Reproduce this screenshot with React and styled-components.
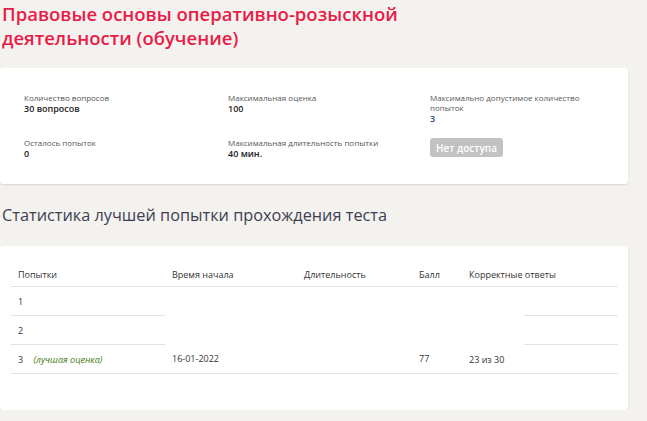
import React from 'react';
import styled, { createGlobalStyle } from 'styled-components';

const GlobalStyle = createGlobalStyle`
  html, body {
    margin: 0;
    padding: 0;
    background: #f3f2ef;
  }
  body {
    font-family: "Open Sans", "Noto Sans", sans-serif;
    color: #333;
  }
`

const Page = styled.div`
  width: 628px;
  padding-top: 2px;
`

const Title = styled.h1`
  margin: 0 0 18px 2px;
  font-size: 18.5px;
  line-height: 24px;
  font-weight: 600;
  color: #e81c48;
`

const Card = styled.div`
  background: #fff;
  border-radius: 3px;
  box-shadow: 0 1px 2px rgba(0, 0, 0, 0.12);
  padding: ${props => props.padding};
`

const InfoGrid = styled.div`
  display: grid;
  grid-template-columns: 204px 202px 1fr;
  row-gap: 13px;
  align-items: start;
`

const Info = styled.div`
  display: flex;
  flex-direction: column;
  max-width: 175px;
`

const Label = styled.span`
  font-size: 8px;
  line-height: 10px;
  color: #555;
`

const Value = styled.span`
  font-size: 9px;
  line-height: 12px;
  font-weight: 600;
  color: ${props => props.accent ? '#2a4a7a' : '#222'};
`

const Button = styled.button`
  align-self: start;
  width: 73px;
  height: 19px;
  padding: 0;
  border: none;
  border-radius: 3px;
  background: #c2c2c2;
  color: #fff;
  font-family: "Open Sans", sans-serif;
  font-size: 10px;
  font-weight: 600;
`

const Heading = styled.h2`
  margin: 20px 0 19px 2px;
  font-size: 16.3px;
  line-height: 23px;
  font-weight: 400;
  color: #3e3e50;
`

const Table = styled.table`
  width: 100%;
  border-collapse: collapse;
  table-layout: fixed;
  font-size: 9px;
`

const Th = styled.th`
  height: 24px;
  padding: 0 0 0 7px;
  text-align: left;
  font-weight: 500;
  color: #333;
  border-bottom: 1px solid #e2e2e2;
`

const Td = styled.td`
  height: 28px;
  padding: 0 0 0 7px;
  color: #333;
  border-bottom: ${props => props.line ? '1px solid #e2e2e2' : 'none'};
`

const Best = styled.em`
  margin-left: 8px;
  font-size: 9px;
  color: #3f7a10;
`

export default function App() {
  return (
    <Page>
      <GlobalStyle />
      <Title>Правовые основы оперативно-розыскной<br />деятельности (обучение)</Title>
      <Card padding="25px 24px 24px">
        <InfoGrid>
          <Info>
            <Label>Количество вопросов</Label>
            <Value>30 вопросов</Value>
          </Info>
          <Info>
            <Label>Максимальная оценка</Label>
            <Value>100</Value>
          </Info>
          <Info>
            <Label>Максимально допустимое количество попыток</Label>
            <Value accent>3</Value>
          </Info>
          <Info>
            <Label>Осталось попыток</Label>
            <Value>0</Value>
          </Info>
          <Info>
            <Label>Максимальная длительность попытки</Label>
            <Value>40 мин.</Value>
          </Info>
          <Button>Нет доступа</Button>
        </InfoGrid>
      </Card>
      <Heading>Статистика лучшей попытки прохождения теста</Heading>
      <Card padding="16px 10px 36px 11px">
        <Table>
          <colgroup>
            <col style={{ width: 154 }} />
            <col style={{ width: 132 }} />
            <col style={{ width: 115 }} />
            <col style={{ width: 50 }} />
            <col style={{ width: 62 }} />
            <col />
          </colgroup>
          <thead>
            <tr>
              <Th>Попытки</Th>
              <Th>Время начала</Th>
              <Th>Длительность</Th>
              <Th>Балл</Th>
              <Th colSpan={2}>Корректные ответы</Th>
            </tr>
          </thead>
          <tbody>
            <tr>
              <Td line>1</Td>
              <Td colSpan={4} rowSpan={2}></Td>
              <Td line></Td>
            </tr>
            <tr>
              <Td line>2</Td>
              <Td line></Td>
            </tr>
            <tr>
              <Td line>3 <Best>(лучшая оценка)</Best></Td>
              <Td line>16-01-2022</Td>
              <Td line></Td>
              <Td line>77</Td>
              <Td line colSpan={2}>23 из 30</Td>
            </tr>
          </tbody>
        </Table>
      </Card>
    </Page>
  );
}
